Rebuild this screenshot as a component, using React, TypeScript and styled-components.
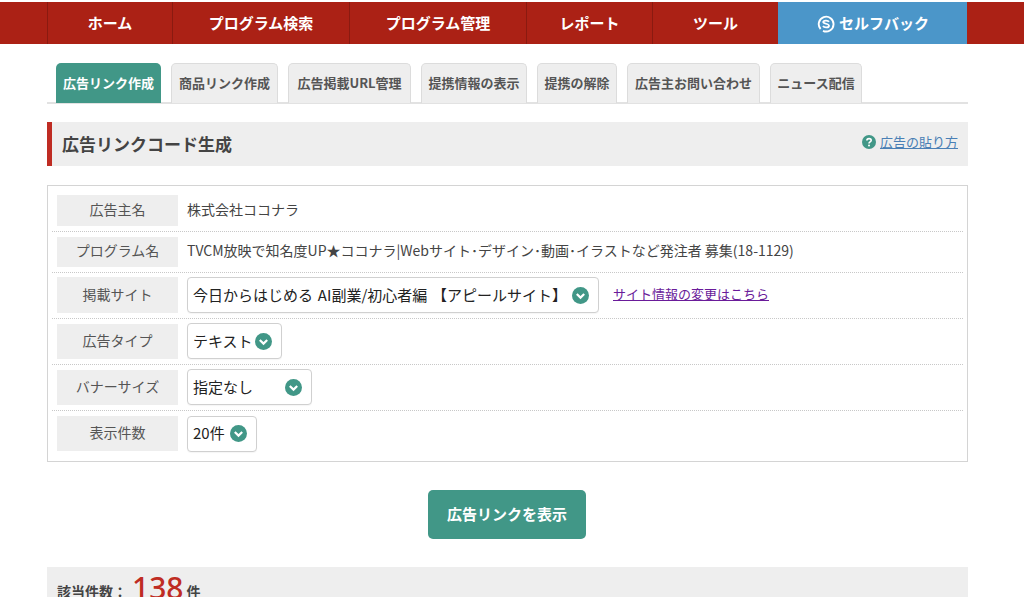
import React from "react";
import styled, { createGlobalStyle } from "styled-components";

const Global = createGlobalStyle`
  html, body { margin: 0; padding: 0; background: #fff; overflow: hidden; }
  body { font-family: "Noto Sans CJK JP", "Liberation Sans", sans-serif; color: #444; }
  * { box-sizing: border-box; }
`;
const Page = styled.div`
  width: 1024px; height: 597px; overflow: hidden; padding-top: 2px;
`;
const NavBar = styled.nav`
  height: 42px; background: #ab2115; padding-left: 47px; display: flex;
`;
const NavItem = styled.a<{ $w: number; $blue?: boolean }>`
  width: ${p => p.$w}px; display: flex; align-items: center; justify-content: center; gap: 4px;
  color: #fff; font-size: 15px; font-weight: 700;
  padding-bottom: 2px;
  border-left: 1px solid ${p => (p.$blue ? "#4b96c9" : "#8a1a10")};
  background: ${p => (p.$blue ? "#4b96c9" : "transparent")};
`;
const Main = styled.main`
  width: 921px; margin-left: 47px;
`;
const Tabs = styled.div`
  display: flex; gap: 10px; height: 41px; margin-top: 19px; padding-left: 9px;
  border-bottom: 2px solid #e2e2e2;
`;
const Tab = styled.a<{ $w: number; $active?: boolean }>`
  width: ${p => p.$w}px; height: 40px; display: flex; align-items: center; justify-content: center;
  font-size: 13px; font-weight: 700; white-space: nowrap; padding-bottom: 2px;
  border-radius: 5px 5px 0 0;
  color: ${p => (p.$active ? "#fff" : "#555")};
  background: ${p => (p.$active ? "#419787" : "#eee")};
  border: ${p => (p.$active ? "none" : "1px solid #dcdcdc")};
  border-bottom: none;
`;
const Heading = styled.div`
  margin-top: 18px; height: 44px; background: #eee; border-left: 5px solid #bf2c23;
  display: flex; align-items: center; justify-content: space-between; padding: 0 10px 0 10px;
`;
const Title = styled.h2`
  margin: 0 0 2px; font-size: 17px; font-weight: 700; color: #444;
`;
const Help = styled.span`
  display: flex; align-items: center; gap: 4px; font-size: 13px; margin-top: -5px;
`;
const HelpLink = styled.a`
  color: #4a7fb5; text-decoration: underline;
`;
const Box = styled.div`
  margin-top: 19px; height: 277px; border: 1px solid #d4d4d4; padding: 4px 4px;
`;
const Row = styled.div<{ $h: number; $last?: boolean }>`
  height: ${p => p.$h}px; display: flex; align-items: center; gap: 9px; padding: 0 5px 1px;
  border-bottom: ${p => (p.$last ? "none" : "1px dotted #c8c8c8")};
`;
const Label = styled.div<{ $h: number }>`
  width: 121px; height: ${p => p.$h}px; background: #eee; color: #555; font-size: 14px; padding-bottom: 3px;
  display: flex; align-items: center; justify-content: center; flex-shrink: 0;
`;
const Value = styled.div`
  font-size: 14px; color: #444; white-space: nowrap; margin-top: -3px;
`;
const Select = styled.div<{ $w: number }>`
  width: ${p => p.$w}px; height: 36px; border: 1px solid #d0d0d0; border-radius: 4px; background: #fff;
  display: flex; align-items: center; justify-content: space-between; padding: 0 9px 2px 5px;
  font-size: 15px; color: #222; white-space: nowrap; word-spacing: 1.5px;
  box-shadow: 0 1px 1px rgba(0,0,0,.04);
`;
const SiteLink = styled.a`
  margin-left: 5px; margin-top: -3px; font-size: 13px; color: #6a1b9a; text-decoration: underline;
`;
const ButtonRow = styled.div`
  display: flex; justify-content: center; margin-top: 28px; padding-right: 1px;
`;
const Button = styled.button`
  width: 158px; height: 49px; background: #419787; color: #fff; border: none; border-radius: 5px;
  padding: 0 0 2px;
  font: 700 15px "Noto Sans CJK JP", sans-serif;
`;
const Count = styled.div`
  margin-top: 28px; height: 60px; background: #eee; padding: 2px 10px; display: flex; align-items: flex-start;
  font-size: 14px; font-weight: 700; color: #444;
`;
const CountLabel = styled.span`
  margin-top: 12px;
`;
const CountNum = styled.span`
  font-family: "Noto Sans", sans-serif; font-size: 30px; font-weight: 500; color: #bf2c23;
  line-height: 38px; margin: 0 3px 0 5px;
`;
const ChevronSvg = styled.svg`
  flex-shrink: 0; margin-top: 2px;
`;
const SelfbackSvg = styled.svg`
  margin-top: 3px;
`;

const Chevron = () => (
  <ChevronSvg width="17" height="17" viewBox="0 0 17 17">
    <circle cx="8.5" cy="8.5" r="8.5" fill="#419787" />
    <path d="M4.8 7 L8.5 10.6 L12.2 7" fill="none" stroke="#fff" strokeWidth="2.2" />
  </ChevronSvg>
);
const QuestionIcon = () => (
  <svg width="14" height="14" viewBox="0 0 14 14">
    <circle cx="7" cy="7" r="7" fill="#419787" />
    <path d="M4.9 5.4 C4.9 3 9.2 3 9.2 5.3 C9.2 6.9 7 6.7 7 8.4" fill="none" stroke="#fff" strokeWidth="1.6" />
    <circle cx="7" cy="10.6" r="1" fill="#fff" />
  </svg>
);
const SelfbackIcon = () => (
  <SelfbackSvg width="18" height="18" viewBox="0 0 18 18">
    <path d="M3.6 14 A7.4 7.4 0 1 1 6 15.8" fill="none" stroke="#fff" strokeWidth="1.9" />
    <path d="M12 6.7 C11 5.1 6.2 5.2 6.2 7.1 C6.2 9.1 12 8.4 12 10.7 C12 12.9 7.2 13 6 11.1" fill="none" stroke="#fff" strokeWidth="1.8" />
  </SelfbackSvg>
);

const navItems = [
  { t: "ホーム", w: 125 },
  { t: "プログラム検索", w: 177 },
  { t: "プログラム管理", w: 177 },
  { t: "レポート", w: 126 },
  { t: "ツール", w: 126 },
];
const tabs = [
  { t: "広告リンク作成", w: 105, a: true },
  { t: "商品リンク作成", w: 107 },
  { t: "広告掲載URL管理", w: 123 },
  { t: "提携情報の表示", w: 106 },
  { t: "提携の解除", w: 80 },
  { t: "広告主お問い合わせ", w: 133 },
  { t: "ニュース配信", w: 92 },
];

export default function App() {
  return (
    <Page>
      <Global />
      <NavBar>
        {navItems.map(n => <NavItem key={n.t} $w={n.w}>{n.t}</NavItem>)}
        <NavItem $w={189} $blue><SelfbackIcon />セルフバック</NavItem>
      </NavBar>
      <Main>
        <Tabs>
          {tabs.map(t => <Tab key={t.t} $w={t.w} $active={t.a}>{t.t}</Tab>)}
        </Tabs>
        <Heading>
          <Title>広告リンクコード生成</Title>
          <Help><QuestionIcon /><HelpLink>広告の貼り方</HelpLink></Help>
        </Heading>
        <Box>
          <Row $h={42}><Label $h={31}>広告主名</Label><Value>株式会社ココナラ</Value></Row>
          <Row $h={41}><Label $h={30}>プログラム名</Label><Value>TVCM放映で知名度UP★ココナラ|Webサイト･デザイン･動画･イラストなど発注者 募集(18-1129)</Value></Row>
          <Row $h={46}>
            <Label $h={36}>掲載サイト</Label>
            <Select $w={412}>今日からはじめる AI副業/初心者編 【アピールサイト】<Chevron /></Select>
            <SiteLink>サイト情報の変更はこちら</SiteLink>
          </Row>
          <Row $h={46}><Label $h={35}>広告タイプ</Label><Select $w={95}>テキスト<Chevron /></Select></Row>
          <Row $h={46}><Label $h={35}>バナーサイズ</Label><Select $w={125}>指定なし<Chevron /></Select></Row>
          <Row $h={46} $last><Label $h={35}>表示件数</Label><Select $w={70}>20件<Chevron /></Select></Row>
        </Box>
        <ButtonRow><Button>広告リンクを表示</Button></ButtonRow>
        <Count><CountLabel>該当件数：</CountLabel><CountNum>138</CountNum><CountLabel>件</CountLabel></Count>
      </Main>
    </Page>
  );
}
